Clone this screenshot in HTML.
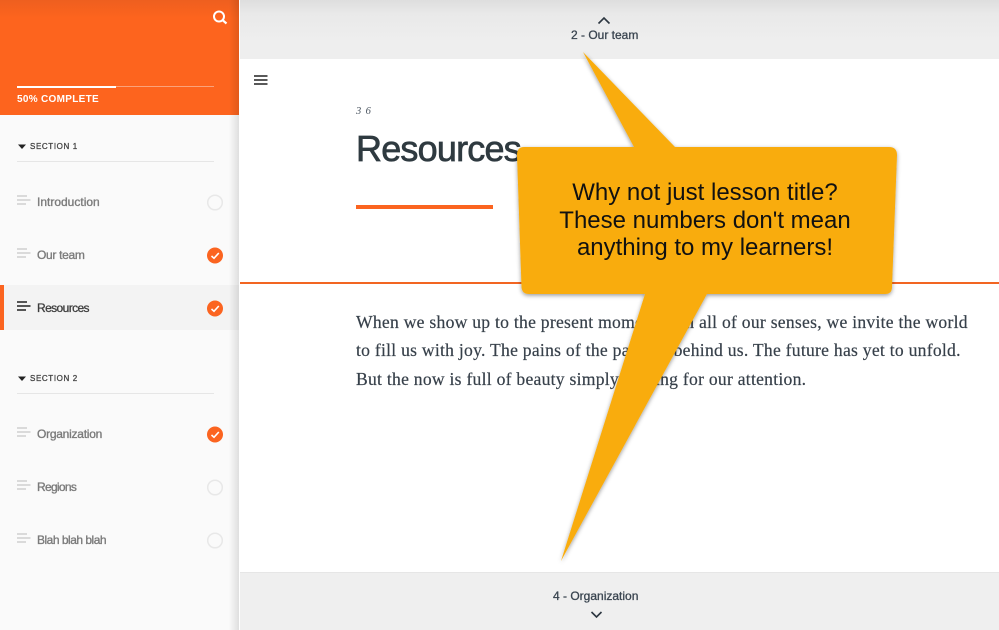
<!DOCTYPE html>
<html><head><meta charset="utf-8">
<style>
html,body{margin:0;padding:0;background:#fff}
#p{position:relative;width:999px;height:630px;overflow:hidden;background:#fff;font-family:"Liberation Sans",sans-serif}
#p div{position:absolute;white-space:nowrap}
.it{left:37px;font-size:12px;font-weight:400;color:#7b7b7b;line-height:14px;-webkit-text-stroke:.35px #7b7b7b}
.sec{left:30px;font-size:8px;font-weight:400;letter-spacing:.62px;color:#444;line-height:10px;-webkit-text-stroke:.3px #444}
.body{left:356px;font-family:"Liberation Serif",serif;font-size:17.6px;letter-spacing:.26px;color:#37404a;line-height:20px;-webkit-text-stroke:.2px #37404a}
.nav{font-size:12px;color:#3a4550;line-height:14px;font-weight:400;-webkit-text-stroke:.3px #3a4550}
svg{position:absolute;left:0;top:0}
</style></head><body>
<div id="p">
<div style="left:240px;top:0;width:759px;height:59px;background:linear-gradient(#dedede,#e9e9e9 14px,#eeeeee 40px)"></div>
<div style="left:240px;top:572px;width:759px;height:58px;background:#efefef;border-top:1px solid #e6e6e6;box-sizing:border-box"></div>
<div style="left:240px;top:282px;width:759px;height:2px;background:#f26522"></div>
<div style="left:356px;top:205px;width:137px;height:4px;background:#fb6420"></div>

<div style="left:0;top:0;width:239px;height:630px;background:#fafafa"></div>
<div style="left:0;top:0;width:239px;height:115px;background:linear-gradient(#ee5f1f,#fd641e 18px)"></div>
<div style="left:17px;top:86px;width:197px;height:1px;background:#fba27a"></div>
<div style="left:17px;top:86px;width:99px;height:2px;background:#fff"></div>
<div style="left:17px;top:94px;font-size:10px;font-weight:700;letter-spacing:.3px;color:#fff;line-height:11px">50% COMPLETE</div>

<div style="left:17px;top:161px;width:197px;height:1px;background:#e6e6e6"></div>
<div style="left:17px;top:393px;width:197px;height:1px;background:#e6e6e6"></div>
<div style="left:0;top:285px;width:239px;height:45px;background:#f3f3f3"></div>
<div style="left:0;top:285px;width:4px;height:45px;background:#fb6420"></div>
<div style="left:229px;top:0;width:10px;height:630px;background:linear-gradient(90deg,rgba(0,0,0,0),rgba(0,0,0,.11))"></div>

<div class="sec" style="top:142px">SECTION 1</div>
<div class="sec" style="top:374px">SECTION 2</div>
<div class="it" style="top:195px">Introduction</div>
<div class="it" style="top:248px;letter-spacing:-.3px">Our team</div>
<div class="it" style="top:301px;color:#3d3d3d;-webkit-text-stroke:.3px #3d3d3d;letter-spacing:-.6px">Resources</div>
<div class="it" style="top:427px;letter-spacing:-.25px">Organization</div>
<div class="it" style="top:480px;letter-spacing:-.7px">Regions</div>
<div class="it" style="top:533px;letter-spacing:-.5px">Blah blah blah</div>

<div style="left:356px;top:106px;font-family:'Liberation Serif',serif;font-style:italic;font-size:10.5px;letter-spacing:.9px;color:#4b5560;line-height:12px">3 6</div>
<div style="left:356px;top:127px;font-size:36px;font-weight:400;color:#2f3a40;line-height:44px;letter-spacing:-.8px;-webkit-text-stroke:.7px #2f3a40">Resources</div>

<div class="body" style="top:312px">When we show up to the present moment with all of our senses, we invite the world</div>
<div class="body" style="top:340px">to fill us with joy. The pains of the past are behind us. The future has yet to unfold.</div>
<div class="body" style="top:369px">But the now is full of beauty simply waiting for our attention.</div>

<div class="nav" style="left:571px;top:28px">2 - Our team</div>
<div class="nav" style="left:553px;top:589px">4 - Organization</div>

<svg width="999" height="630" viewBox="0 0 999 630">
<defs><filter id="s" x="-10%" y="-10%" width="120%" height="120%"><feDropShadow dx="0" dy="1.500" stdDeviation="2" flood-color="#000" flood-opacity=".4"/></filter></defs>
<!-- top / bottom chevrons -->
<path d="M598.500 23.500L604 18L609.500 23.500" fill="none" stroke="#2c3640" stroke-width="1.600"/>
<path d="M591.500 612L596.500 617L601.500 612" fill="none" stroke="#2c3640" stroke-width="1.600"/>
<!-- hamburger -->
<path d="M254 76H267.500M254 80H267.500M254 84H267.500" stroke="#222" stroke-width="1.500"/>
<!-- search -->
<circle cx="219" cy="16.500" r="5" fill="none" stroke="#fff" stroke-width="2"/>
<path d="M222.800 20.300L226.500 23.500" stroke="#fff" stroke-width="2.200"/>
<!-- caret -->
<path d="M18 144.500H26L22 149Z" fill="#222"/>
<path d="M18 376.500H26L22 381Z" fill="#222"/>
<!-- lesson icons -->
<g stroke="#d0d0d0" stroke-width="1.500">
<path d="M17 196H27M17 200H30.500M17 204H26"/>
<path d="M17 249H27M17 253H30.500M17 257H26"/>
<path d="M17 428H27M17 432H30.500M17 436H26"/>
<path d="M17 481H27M17 485H30.500M17 489H26"/>
<path d="M17 534H27M17 538H30.500M17 542H26"/>
</g>
<path d="M17 302H27M17 306H30.500M17 310H26" stroke="#222" stroke-width="1.600"/>
<!-- status -->
<g fill="none" stroke="#e8e8e8" stroke-width="1.500">
<circle cx="215" cy="202.500" r="7.300"/>
<circle cx="215" cy="487.500" r="7.300"/>
<circle cx="215" cy="540.500" r="7.300"/>
</g>
<g fill="#fb6420">
<circle cx="215" cy="255.500" r="8"/>
<circle cx="215" cy="308.500" r="8"/>
<circle cx="215" cy="434.500" r="8"/>
</g>
<g fill="none" stroke="#fff" stroke-width="1.600">
<path d="M211.500 256L214 258.300L218.800 253"/>
<path d="M211.500 309L214 311.300L218.800 306"/>
<path d="M211.500 435L214 437.300L218.800 432"/>
</g>
<!-- callout -->
<path filter="url(#s)" fill="#f9ac0a" d="M583 52L675 147H889Q897 147 897 155L892 287Q892 294 885 294H707L561 561L645 294H529Q522 294 521.500 287L517 155Q517 147 524 147H634Z"/>
</svg>
<div style="left:517px;top:179px;width:376px;text-align:center;font-size:24px;line-height:27.500px;color:#111">Why not just lesson title?<br>These numbers don't mean<br>anything to my learners!</div>
</div>
</body></html>
